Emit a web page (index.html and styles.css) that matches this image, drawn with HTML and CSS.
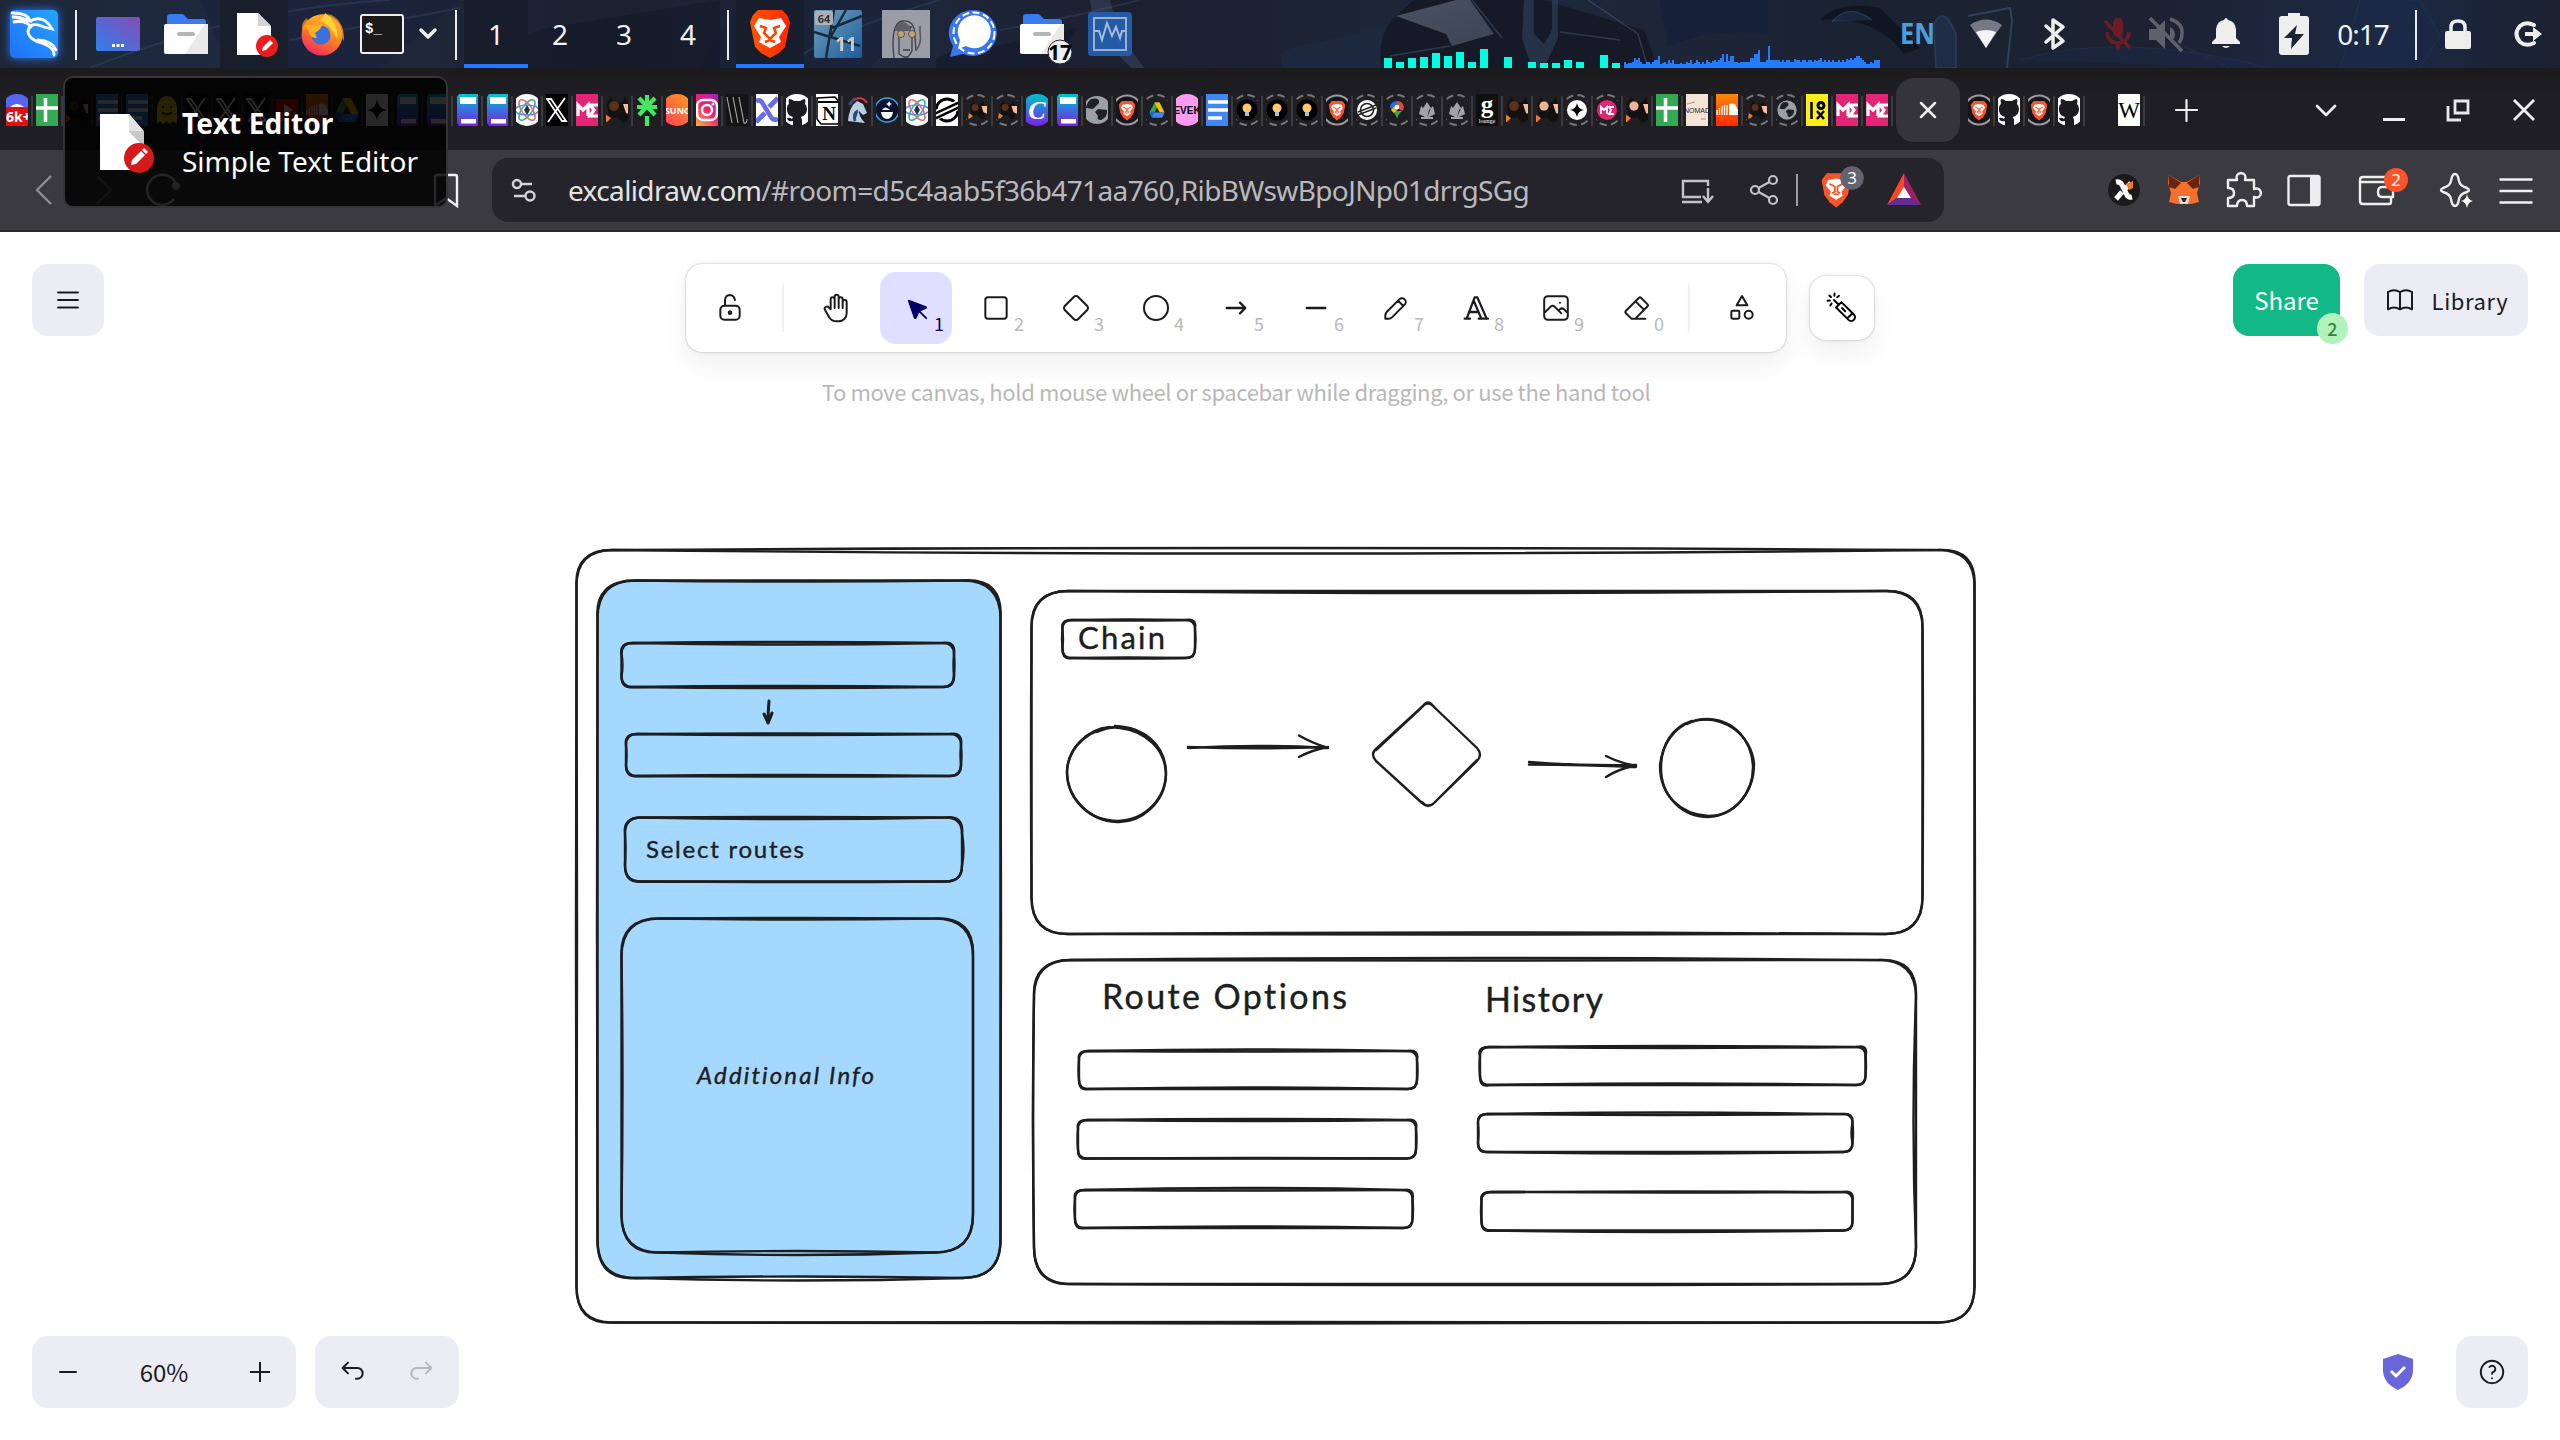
FILE: index.html
```html
<!DOCTYPE html>
<html lang="en">
<head>
<meta charset="utf-8">
<title>Excalidraw</title>
<link rel="stylesheet" href="styles.css">
</head>
<body>
<svg class="defs" width="0" height="0" aria-hidden="true">
<defs>
<linearGradient id="gNote" x1="0" y1="0" x2="0" y2="1"><stop offset="0" stop-color="#00c4cc"/><stop offset=".5" stop-color="#3b6fe0"/><stop offset="1" stop-color="#7d1fe8"/></linearGradient>
<linearGradient id="gInsta" x1="1" y1="0" x2="0" y2="1"><stop offset="0" stop-color="#8a1fe8"/><stop offset=".5" stop-color="#f5206c"/><stop offset="1" stop-color="#ffcf3f"/></linearGradient>
<linearGradient id="gSuno" x1="1" y1="0" x2="0" y2="1"><stop offset="0" stop-color="#ffa21a"/><stop offset="1" stop-color="#ff3a5c"/></linearGradient>
<linearGradient id="gCloud" x1="0" y1="0" x2="0" y2="1"><stop offset="0" stop-color="#ff8a00"/><stop offset="1" stop-color="#ff2a00"/></linearGradient>
<linearGradient id="gKali" x1="1" y1="0" x2="0" y2="1"><stop offset="0" stop-color="#25a4ff"/><stop offset="1" stop-color="#2070f8"/></linearGradient>
<linearGradient id="gDesk" x1="0" y1="1" x2="1" y2="0"><stop offset="0" stop-color="#3080ea"/><stop offset="1" stop-color="#854cb4"/></linearGradient>
<linearGradient id="gFox" x1=".8" y1="0" x2=".3" y2="1"><stop offset="0" stop-color="#ffe04a"/><stop offset=".45" stop-color="#ff8a1e"/><stop offset="1" stop-color="#f02860"/></linearGradient>
<linearGradient id="gBrave" x1="0" y1="0" x2="1" y2="0"><stop offset="0" stop-color="#ff5500"/><stop offset="1" stop-color="#ff2600"/></linearGradient>
<linearGradient id="gVm" x1="0" y1="0" x2="1" y2="1"><stop offset="0" stop-color="#7cb4cc"/><stop offset="1" stop-color="#1c64ac"/></linearGradient>
<linearGradient id="gMetal" x1="0" y1="0" x2="1" y2="1"><stop offset="0" stop-color="#4a5363"/><stop offset="1" stop-color="#3c4454"/></linearGradient>

<g id="cat"><path d="M6 10 10 3l5 6 6-1 4-5 2 7v16l-5 3-6-6-8 2z" fill="#111"/><circle cx="13" cy="12" r="5" fill="#5a3018"/><path d="M22 10h8v11l-5-2z" fill="#f7bd96"/><path d="M4 20l6 4-4 4H3z" fill="#f07a2c"/></g>
<g id="lion"><path d="M9 4h14l4 5-2 11-4 6-5 4-5-4-4-6L5 9z" fill="#fb542b"/><path d="M10 9l6-1 6 1 2 4-4 5 1 3-5 3-5-3 1-3-4-5z" fill="#fff"/><path d="M11 12l4 2v4l-2 1M21 12l-4 2v4l2 1M14 20h4" stroke="#fb542b" stroke-width="1.4" fill="none"/></g>
<g id="ring"><circle cx="16" cy="16" r="15" fill="none" stroke="#77777b" stroke-width="2" stroke-dasharray="7.5 4.28"/></g>
<g id="gem"><circle cx="16" cy="16" r="16" fill="#fff"/><g fill="none" stroke-width="1.6"><ellipse cx="16" cy="16" rx="5" ry="12" stroke="#3fb18a" transform="rotate(35 16 16)"/><ellipse cx="16" cy="16" rx="5" ry="12" stroke="#ec6a6a" transform="rotate(-35 16 16)"/><ellipse cx="16" cy="16" rx="5" ry="12" stroke="#5c8de8" transform="rotate(90 16 16)"/></g><path d="M16 11l3 5-3 5-3-5z" fill="#20304f"/></g>

<g id="t-discord"><circle cx="16" cy="16" r="16" fill="#5865f2"/><path d="M9 13q7-6 14 0v4H9z" fill="#fff"/><rect x="3" y="13" width="26" height="19" rx="4" fill="#e01010"/><text x="5" y="28" font-size="14" font-weight="700" fill="#fff" font-family="Noto Sans">6k+</text></g>
<g id="t-sheets"><rect width="32" height="32" fill="#34a853"/><path d="M5 14h22M14.500 4v24" stroke="#fff" stroke-width="3.500"/></g>
<g id="t-cat"><use href="#cat"/></g>
<g id="t-catl"><use href="#cat"/><circle cx="13" cy="12" r="4.500" fill="#e8b898"/></g>
<g id="t-catr"><use href="#ring"/><use href="#cat" transform="translate(5 5) scale(.7)"/></g>
<g id="t-docs"><rect width="32" height="32" fill="#4285f4"/><path d="M7 8h20M7 16h20M7 24h14" stroke="#fff" stroke-width="3.600"/></g>
<g id="t-hug"><path d="M6 30V14a10 12 0 0 1 20 0v16l-4-3-3 3-3-3-4 3-3-3z" fill="#ffd21e"/><path d="M12 12v2M20 12v2M11 18q5 5 10 0" stroke="#333" stroke-width="2" fill="none"/></g>
<g id="t-x"><rect width="32" height="32" fill="#000"/><path d="M6 5l15 22h4L10 5zM24 4 7 28" stroke="#fff" stroke-width="1.800" fill="none"/></g>
<g id="t-yt"><rect y="5" width="32" height="22" rx="4" fill="#f00"/><path d="M13 10l9 6-9 6z" fill="#fff"/></g>
<g id="t-sound"><rect width="32" height="32" fill="url(#gCloud)"/><path d="M6 16v5M8.500 14v7M11 12v9M13.500 11v10M16 11v10" stroke="#fff" stroke-width="1.300"/><path d="M18 10q7-2 8 5 6 0 5 6H18z" fill="#fff"/></g>
<g id="drive"><path d="M12 4h8l-4 8-8 15-4-7z" fill="#34a853"/><path d="M12 4h8l8 16h-8z" fill="#fbbc04"/><path d="M8 20h20l-4 8H8z" fill="#4285f4"/><path d="M8 28l-4-7 4-3 4 2z" fill="#1967d2"/></g>
<g id="t-drive"><use href="#drive"/></g>
<g id="t-driver"><use href="#ring"/><use href="#drive" transform="translate(6 6) scale(.63)"/></g>
<g id="t-star"><rect width="32" height="32" fill="#f4f4f4"/><path d="M16 5q1 10 10 11-9 1-10 11-1-10-10-11 9-1 10-11z"/></g>
<g id="t-starr"><use href="#ring"/><circle cx="16" cy="16" r="10" fill="#fff"/><path d="M16 9q1 6 7 7-6 1-7 7-1-6-7-7 6-1 7-7z"/></g>
<g id="t-note"><path d="M6 3l2-3h19v32H8l-2-3z" fill="url(#gNote)"/><rect x="9" y="3" width="16" height="7" fill="#fff"/><rect x="10" y="25" width="15" height="4.500" fill="#fff"/></g>
<g id="t-gem"><use href="#gem"/></g>
<g id="t-me"><rect width="32" height="32" fill="#e42575"/><path d="M7 22V11l5 5 5-5v11M27 11h-8l4 5-4 6h9" stroke="#fff" stroke-width="3.200" fill="none"/></g>
<g id="t-mer"><use href="#ring"/><circle cx="16" cy="16" r="10" fill="#e42575"/><path d="M10 20v-7l3 3 3-3v7M23 13h-5l2 3-2 4h5" stroke="#fff" stroke-width="1.800" fill="none"/></g>
<g id="t-link"><path d="M16 1v12M16 22v10M6 13h20M8 4l16 17M24 4 8 21" stroke="#43e660" stroke-width="4.200"/></g>
<g id="t-suno"><circle cx="16" cy="16" r="16" fill="url(#gSuno)"/><text x="17" y="19.500" text-anchor="middle" font-size="9" font-weight="700" fill="#fff" font-family="Noto Sans">SUNO</text></g>
<g id="t-insta"><rect width="32" height="32" fill="url(#gInsta)"/><rect x="6" y="6" width="20" height="20" rx="6" fill="none" stroke="#fff" stroke-width="2.400"/><circle cx="16" cy="16" r="5" fill="none" stroke="#fff" stroke-width="2.400"/><circle cx="22" cy="10" r="1.500" fill="#fff"/></g>
<g id="t-slash"><rect width="32" height="32" fill="#141414"/><path d="M6 3l5 26M12 3l5 26M18 3l5 26q3 1 3-4" stroke="#aaa" stroke-width="1.100" fill="none"/></g>
<g id="t-cross"><rect width="32" height="32" fill="#fff"/><path d="M5 7q5-2 7 3l8 13q2 4 7 2" stroke="#6b6be4" stroke-width="4.500" fill="none"/><path d="M27 4 18 13M14 19 5 28" stroke="#6b6be4" stroke-width="5"/></g>
<g id="t-git"><circle cx="16" cy="16" r="16" fill="#fff"/><path d="M12 32v-5q-5 1-6-3 3-1 5 1l1-2q-7-2-6-9 0-3 2-4-1-3 0-5 3 0 5 2h6q3-2 5-2 1 2 0 5 2 2 2 5 0 6-6 8l1 3v6z" fill="#1b1b20"/></g>
<g id="t-notion"><rect y="0" width="32" height="32" rx="2" fill="#fff"/><path d="M6 4l18-1 4 5v22H10l-4-5z" fill="none" stroke="#000" stroke-width="1.600"/><path d="M7 8h20" stroke="#000" stroke-width="2"/><text x="18" y="26" text-anchor="middle" font-size="19" font-weight="700" font-family="Liberation Serif">N</text></g>
<g id="t-horse"><path d="M7 27q1-14 9-20l6 3 4 9-4 2-4-4q0 6 6 12z" fill="#b9cfe4"/><path d="M8 11l6-7M14 27q-2-8 3-10" stroke="#2b4d83" stroke-width="3"/><path d="M13 6q8-5 13 3" stroke="#d82f3a" stroke-width="2" fill="none"/></g>
<g id="t-moon"><circle cx="16" cy="16" r="12" fill="#0a1230" stroke="#38a3dd" stroke-width="1.500"/><path d="M10 18h12q-1 7-6 7t-6-7z" fill="#fff"/><path d="M11 16q3-5 8 0z" fill="#fff"/><path d="M18 7l1 2 2 1-2 1-1 2-1-2-2-1 2-1z" fill="#fff"/></g>
<g id="t-stellar"><rect width="32" height="32" fill="#fff"/><circle cx="16" cy="16" r="11" fill="none" stroke="#000" stroke-width="2.800"/><path d="M2 20 30 7M2 25 30 12" stroke="#fff" stroke-width="5"/><path d="M3 20 29 8M3 25 29 13" stroke="#000" stroke-width="2.500"/></g>
<g id="t-stellarr"><use href="#ring"/><circle cx="16" cy="16" r="10" fill="#fff"/><circle cx="16" cy="16" r="6.500" fill="none" stroke="#222" stroke-width="1.500"/><path d="M7 18l18-7M7 21l18-7" stroke="#222" stroke-width="1.500"/></g>
<g id="t-canva"><circle cx="16" cy="16" r="16" fill="url(#gNote)"/><text x="16" y="25" text-anchor="middle" font-size="26" font-weight="700" font-style="italic" fill="#fff" font-family="Liberation Serif">C</text></g>
<g id="globe"><circle cx="16" cy="16" r="14" fill="#9aa0a6"/><path d="M10 5q9-2 8 4l-6 6-7-1q1-6 5-9zM17 15l9 1q1 7-6 10-5 0-3-4l-3-4z" fill="#202124"/></g>
<g id="t-globe"><use href="#globe"/></g>
<g id="t-glober"><use href="#ring"/><use href="#globe" transform="translate(5 5) scale(.69)"/></g>
<g id="t-lion"><circle cx="16" cy="16" r="14.500" fill="#15151a" stroke="#9a9aa0" stroke-width="2.200"/><use href="#lion" transform="translate(4 4) scale(.75)"/></g>
<g id="t-evek"><circle cx="16" cy="16" r="16" fill="#ff9cf2"/><text x="16" y="20" text-anchor="middle" font-size="10" font-weight="700" font-family="Liberation Sans">EVEK</text></g>
<g id="t-bulb"><use href="#ring"/><circle cx="16" cy="16" r="10.500"/><circle cx="16" cy="14" r="4.500" fill="#ffc868"/><rect x="14" y="18" width="4" height="4" fill="#b9b9b9"/></g>
<g id="t-map"><use href="#ring"/><path d="M16 26q0-5-5-9h10q-5 4-5 9z" fill="#34a853"/><path d="M9 13a7 6 0 0 1 7-6l2 6-6 5z" fill="#1a73e8"/><path d="M16 7a7 6 0 0 1 5 10l-5-3z" fill="#ea4335"/><path d="M10 16l5-5 3 3-5 5z" fill="#fbbc04"/><circle cx="16" cy="13" r="2.300" fill="#fff"/></g>
<g id="t-lotus"><use href="#ring"/><path d="M16 8l4 6-4 10-4-10zM10 12l4 4 2 8-8-4zM22 12l-4 4-2 8 8-4z" fill="#a3a3a5"/><path d="M10 24h12" stroke="#a3a3a5" stroke-width="2"/></g>
<g id="t-g"><rect width="32" height="32" fill="#101010"/><text x="16" y="19" text-anchor="middle" font-size="25" font-weight="700" fill="#fff" font-family="Liberation Serif">g</text><text x="16" y="29" text-anchor="middle" font-size="6" fill="#fff" font-family="Liberation Serif">lounge</text></g>
<g id="t-nomad"><rect width="32" height="32" fill="#f3e4d6"/><text x="16" y="19" text-anchor="middle" font-size="7" fill="#222" font-family="Liberation Sans">NOMAD</text><path d="M6 10l8-2M20 25h5" stroke="#999"/></g>
<g id="t-lox"><rect width="32" height="32" fill="#fcee1e"/><path d="M10.500 8v17" stroke="#000" stroke-width="2.500"/><circle cx="20" cy="11.500" r="3" fill="none" stroke="#000" stroke-width="3"/><path d="M16 17l7 8M23 17l-7 8" stroke="#000" stroke-width="2.500"/></g>
<g id="t-wiki"><rect width="32" height="32" fill="#fff"/><text x="16" y="24" text-anchor="middle" font-size="23" font-family="Liberation Serif">W</text></g>
</defs>
</svg>

<header class="panel">
<svg class="wallpaper" viewBox="0 0 2560 68" aria-hidden="true">
<path d="M200 0h260l-80 68H230zM740 0h190l-60 68H700z" fill="#18203a" opacity=".5"/>
<path d="M90 68q150-60 300-68M290 40l170-32M780 68q60-40 160-68M1000 30q60-10 140-30" stroke="#46618c" stroke-width="2" fill="none" opacity=".25"/>
<path d="M936 60q20-16 60-14l80-18-20 40h-120zM520 50q0-20 40-24l160-26v68H520z" fill="#0e1524" opacity=".4"/>
<path d="M1090 0h20q6 30 34 68h-12q-40-34-42-68z" fill="#6d87ac" opacity=".2"/>
<path d="M1280 56q6-10 40-14l70-18-8 44h-100z" fill="#1d2940" opacity=".8"/>
<path d="M1382 68q-6-30 12-50l20-18h130l100 30 14 38z" fill="#151a26"/>
<path d="M1396 16 1456 0h14l24 34-42 12-6-12z" fill="url(#gMetal)"/>
<path d="M1524 0h10v34l10 10 8-14V0h6v38l-14 30h-12l-10-30z" fill="#31435f" opacity=".6"/>
<path d="M1472 0l30 38M1560 32l60 8M1588 0l50 34 10 34M1390 56l60-10" stroke="#61769c" stroke-width="1.500" fill="none" opacity=".35"/>
<path d="M1660 0h108v35q-50-10-100 12z" fill="#14203a" opacity=".7"/>
<path d="M1820 20q20-20 60-12l40 40-16 6q-30-40-84-34z" fill="#0f1622"/>
<path d="M1832 22q16-20 40-2M1936 68l-2-44q10-20 22 10v34z" stroke="#3f5c88" stroke-width="1.500" fill="#263a5c" opacity=".45"/>
<path d="M1968 16l42-8 2 12-5 48" stroke="#5579a8" stroke-width="2" fill="none" opacity=".35"/>
<path d="M2020 60q100-30 250 8M2170 40l60 28M2360 0h60l20 36-20 32h-80z" stroke="#233d6b" fill="#1a2b4c" opacity=".4"/>
</svg>
<div class="slot"><svg viewBox="-34 0 68 68"><rect x="-24" y="10" width="48" height="48" rx="5" class="glow" fill="url(#gKali)"/><path d="M-22 13q16 0 18 8-12-5-18-4 10 0 15 6-8-3-14-1 14-2 18 5M-4 21q14-7 22 8l-8-2q-12-5-15 1-4 8 9 14 16 4 16 13M4 40q14 1 18 10" fill="none" stroke="#fff" stroke-width="2.800" stroke-linecap="round"/></svg></div>
<div class="slot sep"><i></i></div>
<div class="slot"><svg viewBox="-34 0 68 68"><rect x="-22" y="17" width="44" height="34" rx="2" fill="url(#gDesk)"/><path d="M-6 45.500h3M-1.500 45.500h3M3 45.500h3" stroke="#fff" stroke-width="3"/></svg></div>
<div class="slot"><svg viewBox="-34 0 68 68"><path d="M-19 26v-9q0-3 3-3h13l5 5h15q3 0 3 3v6z" fill="#367bf0"/><rect x="-22" y="24" width="44" height="30" rx="2" fill="#fff"/><path d="M22 24v30H-1l20-30z" fill="#e9e9ea"/><path d="M-7 34h14" stroke="#b5b5b5" stroke-width="4" stroke-linecap="round"/></svg></div>
<div class="slot hover"><svg viewBox="-34 0 68 68"><path d="M-17 13h21l13 13v29h-34z" fill="#fff"/><path d="M4 13l13 13H4z" fill="#d3d3d3"/><circle cx="13" cy="46" r="11" fill="#ed1c1c"/><path d="M8 51l1-4 7-7 3 3-7 7z" fill="#fff"/></svg></div>
<div class="slot"><svg viewBox="-34 0 68 68"><circle cy="35" r="20.500" fill="url(#gFox)"/><path d="M-20 30q-1-8 5-12l2 5q6-2 8-8 8-2 14 0l-4-2q18 6 17 28l-8-12z" fill="#ff9a1f" opacity=".7"/><circle cx="-1" cy="35" r="9.500" fill="#3a6fe0"/><path d="M-16 25q8-1 11 1l5-2q0 5-7 9l2 5q-7 0-8-6z" fill="#ffb01f"/><path d="M-2 20Q2 18 3 13q14 10 12 26-6-14-17-19z" fill="#ffd13a"/></svg></div>
<div class="slot w52"><svg viewBox="-26 0 52 68"><rect x="-21" y="15" width="42" height="38" rx="2" fill="#1a1a1a" stroke="#eee" stroke-width="2"/><text x="-17" y="33" class="mono" font-size="14">$_</text></svg></div>
<div class="slot w40"><svg viewBox="-20 0 40 68"><path d="M-7 30l7 7 7-7" class="ln w3"/></svg></div>
<div class="slot sep"><i></i></div>
<div class="slot ws on">1</div><div class="slot ws">2</div><div class="slot ws">3</div><div class="slot ws">4</div>
<div class="slot sep"><i></i></div>
<div class="slot on"><svg viewBox="-34 0 68 68"><path d="M-12 10h24l5 5 3 7-5 25-6 6-9 5-9-5-6-6-5-25 3-7z" fill="url(#gBrave)"/><path d="M-11 18l11 2 11-2 5 8-7 11 2 5-11 6-11-6 2-5-7-11z" fill="#fff"/><path d="M-10 26l6 2-2 5 6 6 6-6-2-5 6-2M-5 42l5-2 5 2" fill="none" stroke="#ff4200" stroke-width="2.500"/></svg></div>
<div class="slot"><svg class="dim" viewBox="-34 0 68 68"><rect x="-24" y="10" width="48" height="48" rx="2" fill="url(#gVm)"/><path d="M-24 32 22 46M-4 10-12 58M8 10l-16 28M-6 28l30-12" stroke="#1b2a3d" stroke-width="2.500"/><rect x="-23" y="11" width="18" height="14" rx="2" fill="#c3c3c3"/><text x="-14" y="22.500" text-anchor="middle" class="lbl" font-size="11" fill="#333">64</text><text x="8" y="51" text-anchor="middle" class="lbl" font-size="19" fill="#e4e4e4">11</text></svg></div>
<div class="slot"><svg viewBox="-34 0 68 68"><rect x="-24" y="10" width="48" height="48" fill="#9a9da6"/><path d="M-12 58q-4-34 8-37 13-2 13 16l1 14M-7 32v22l5 3h4l4-6V30M-6 27h12M-3 50h7" fill="none" stroke="#3b3e48" stroke-width="1.300"/><path d="M-11 28q8-12 16 0v3h-16z" fill="#5c5f68"/><circle cx="-5" cy="34" r="3.500" fill="#c8a46a" stroke="#555"/><circle cx="6" cy="34" r="3.500" fill="#c8a46a" stroke="#555"/><path d="M10 50q6-6 4-18v-6" stroke="#55575f" fill="none" stroke-width="1.600"/></svg></div>
<div class="slot"><svg viewBox="-34 0 68 68"><path d="M-24 57l3-11a24 23 0 1 1 10 8z" fill="#3a76f0"/><circle cy="33" r="20.500" fill="none" stroke="#fff" stroke-width="2" stroke-dasharray="7 3.500"/><path d="M-16 49l2-9a16.500 16.500 0 1 1 6 6z" fill="#fff"/></svg></div>
<div class="slot"><svg viewBox="-34 0 68 68"><path d="M-19 26v-9q0-3 3-3h13l5 5h15q3 0 3 3v6z" fill="#367bf0"/><rect x="-22" y="24" width="44" height="30" rx="2" fill="#fff"/><path d="M22 24v30H-1l20-30z" fill="#e9e9ea"/><path d="M-7 34h14" stroke="#b5b5b5" stroke-width="4" stroke-linecap="round"/><circle cx="18" cy="52" r="12" fill="#eee" stroke="#222"/><text x="18" y="60" text-anchor="middle" class="lbl" font-size="21" fill="#000">17</text></svg></div>
<div class="slot"><svg viewBox="-34 0 68 68"><rect x="-22" y="12" width="44" height="44" rx="4" fill="#235ba9"/><rect x="-16" y="18" width="32" height="32" fill="none" stroke="#9cafca" stroke-width="2"/><path d="M-16 31h5l3 9 5-17 5 13 4-9 4 11 2-7h4" fill="none" stroke="#a9bbd4" stroke-width="2"/></svg></div>
<svg class="graphs" viewBox="0 0 496 68"><path id="cpu" fill="#00ffe1"/><path id="net" fill="#237bff"/></svg>
<div class="slot"><svg viewBox="-34 0 68 68"><text x="-18" y="43.500" class="lbl" font-size="28.500" fill="#4c9fdc" textLength="35" lengthAdjust="spacingAndGlyphs">EN</text></svg></div>
<div class="slot"><svg viewBox="-34 0 68 68"><path d="M-16 25q16-11 32 0l-16 23z" fill="#8b9098" opacity=".8"/><path d="M-10 32q10-4 20 0L0 48z" fill="#f4f4f4"/></svg></div>
<div class="slot"><svg viewBox="-34 0 68 68"><path d="M-8 26 9 41-1 48V20l10 7L-8 42" class="ln" stroke-width="3.500"/></svg></div>
<div class="slot w56"><svg viewBox="-28 0 56 68"><rect x="-3" y="18" width="10" height="19" rx="5" fill="#6a1d24"/><path d="M-9 32q1 11 11 11t11-11M2 43v7M-11 21l25 27" fill="none" stroke="#6a1d24" stroke-width="3.500"/></svg></div>
<div class="slot w46"><svg viewBox="-23 0 46 68"><path d="M-18 29h7l9-9v29l-9-9h-7zM3 27q5 2 5 8 0 4-5 6z" fill="#5c616b"/><path d="M3 19q13 4 12 15 0 5-3 9M-17 18l32 33" fill="none" stroke="#5c616b" stroke-width="3.500"/></svg></div>
<div class="slot w72"><svg viewBox="-36 0 72 68"><path d="M-14 44v-2l4-4v-9q1-8 8-9 2-4 4 0 7 1 8 9v9l4 4v2zM-4 46h8q-4 4-8 0z" fill="#eeeeec"/></svg></div>
<div class="slot w64"><svg viewBox="-32 0 64 68"><path d="M-6 13H6v3h6q3 0 3 3v33q0 3-3 3h-24q-3 0-3-3V19q0-3 3-3h6z" fill="#eeeeec"/><path d="M3 25-10 38h8l-1 11L10 34H1z" fill="#1d2433"/></svg></div>
<div class="slot w74 clock">0:17</div>
<div class="slot w32 sep"><i></i></div>
<div class="slot w52"><svg viewBox="-26 0 52 68"><rect x="-13" y="31" width="26" height="18" rx="2" fill="#eeeeec"/><path d="M-7 32v-5q0-6 7-6t7 6v5" fill="none" stroke="#eeeeec" stroke-width="3.500"/></svg></div>
<div class="slot w76"><svg viewBox="-44 0 76 68"><path d="M6 25q-8-4-14 1-7 8 0 16 6 5 14 1" class="ln" stroke-width="4"/><path d="M-3 32H5v-5l9 7-9 7v-5h-8z" fill="#eeeeec"/></svg></div>
</header>

<div class="tabstrip">
<div class="tabs" id="tabs"></div>
<div class="active-tab"><svg viewBox="0 0 64 64"><path d="M25 25l14 14M39 25 25 39" class="ln" stroke-width="2.500"/></svg></div>
<div class="tabs rest" id="tabs-rest"></div>
<div class="winctl">
<svg viewBox="-40 68 80 82"><path d="M-10 110H11M.500 100v21" class="ln" stroke-width="2.200"/></svg>
<svg class="push" viewBox="-40 68 68 82"><path d="M-9 106l9 9 9-9" class="ln" stroke-width="2.800"/></svg>
<svg viewBox="-40 68 68 82"><path d="M-11 119.500h22" stroke="#eee" stroke-width="3"/></svg>
<svg viewBox="-36 68 68 82"><path d="M-3 101h13v12h-13zM-10 106v14H3" fill="none" stroke="#e8e8ea" stroke-width="2.800"/></svg>
<svg viewBox="-34 68 68 82"><path d="M-10 100 10 120M10 100-10 120" stroke="#eee" stroke-width="2.800"/></svg>
</div>
</div>

<div class="toolbar">
<nav class="nav">
<svg viewBox="-30 150 60 80"><path d="M7 176-7 190 7 204" fill="none" stroke="#8f8f93" stroke-width="2.400"/></svg>
<svg viewBox="-30 150 60 80"><path d="M-7 176 7 190-7 204" fill="none" stroke="#77777b" stroke-width="2.400"/></svg>
<svg viewBox="-30 150 60 80"><path d="M10 199a15 15 0 1 1 2-15" fill="none" stroke="#e6e6ea" stroke-width="2.400"/><circle cx="12" cy="186" r="4" fill="#e6e6ea"/></svg>
<svg class="push" viewBox="-30 150 60 80"><path d="M-11 206v-29q0-2 2-2H9q2 0 2 2v29l-11-8z" fill="none" stroke="#f2f2f4" stroke-width="2.400"/></svg>
</nav>
<div class="address">
<svg class="w76" viewBox="-32 150 76 80"><path d="M-4 184H8M-10 196H1" stroke="#d5d5d8" stroke-width="2.400"/><circle cx="-7" cy="184" r="4" fill="none" stroke="#d5d5d8" stroke-width="2.400"/><circle cx="6" cy="196" r="4.500" fill="none" stroke="#d5d5d8" stroke-width="2.400"/></svg>
<span class="url"><b>excalidraw.com</b>/#room=d5c4aab5f36b471aa760,RibBWswBpoJNp01drrgSGg</span>
<svg class="w68 push" viewBox="-34 150 68 80"><path d="M11 186v-5H-14v16H4M-15 202H5M11 188v12M6 196l5 6 5-6" fill="none" stroke="#c3c3c7" stroke-width="2.400"/></svg>
<svg class="w62" viewBox="-33 150 62 80"><path d="M-9 190 9 180M-9 190 9 200" stroke="#c3c3c7" stroke-width="2.200"/><g fill="#25242a" stroke="#c3c3c7" stroke-width="2.200"><circle cx="-9" cy="190" r="4"/><circle cx="9" cy="180" r="4"/><circle cx="9" cy="200" r="4"/></g></svg>
<i class="bar"></i>
<svg class="w68" viewBox="-34 150 68 80"><use href="#lion" transform="translate(-20 168) scale(1.32)"/><circle cx="17" cy="178" r="11.800" fill="#63636f"/><text x="17" y="184" text-anchor="middle" font-size="17" fill="#fff" class="noto">3</text></svg>
<svg class="w68" viewBox="-35 150 68 80"><path d="M0 173-17 205 0 194z" fill="#ff4724"/><path d="M0 173 17 205 0 194z" fill="#9e1f63"/><path d="M-17 205H17L0 192z" fill="#662d91"/><path d="M0 187-7 198H7z" fill="#fff"/></svg>
</div>
<div class="ext">
<svg viewBox="-30 150 60 80"><circle cy="190" r="16" fill="#1a1a1a"/><path d="M-8 182q5-1 7 5l3 6q2 5 6 4M7 183l-6 6M-2 192l-6 7" fill="none" stroke="#fff" stroke-width="5"/><path d="M2 184l7-3v7l-4 2z" fill="#f07a2c"/></svg>
<svg viewBox="-30 150 60 80"><path d="M-15 175-3 182H3L15 175l1 8-3 10 2 9-8 2H-7l-8-2 2-9-3-10z" fill="#f6702c"/><path d="M-15 175-3 183l-6 6-6-2zM15 175 3 183l6 6 6-2z" fill="#6b2412"/><path d="M-6 196H6L4 204H-4z" fill="#e6d8d0"/><path d="M-3 198H3L1 202H-1z" fill="#222"/></svg>
<svg viewBox="-28 150 60 80"><path d="M-14 180h9q-2-6 4-7 6 1 4 7h9v9q6-2 7 4-1 6-7 4v9H5q0-6-5-6t-5 6h-9v-8q6 0 6-5t-6-5z" class="ln" stroke-width="2.400"/></svg>
<svg viewBox="-30 150 60 80"><rect x="-15.500" y="176" width="31" height="29" rx="2" fill="none" stroke="#ededf0" stroke-width="2.400"/><path d="M6 176h10v29H6z" fill="#ededf0"/></svg>
<svg class="w84" viewBox="-42 150 84 80"><path d="M15 187v-8q0-2-2-2h-26q-3 0-3 3v21q0 3 3 3h26q2 0 2-2v-5M-15 182H14M17 187H6q-4 0-4 5t4 5h11z" class="ln" stroke-width="2.400"/><circle cx="20" cy="180" r="12" fill="#fb542b"/><text x="20" y="186" text-anchor="middle" font-size="17" fill="#fff" class="noto">2</text></svg>
<svg class="w76" viewBox="-38 150 76 80"><path d="M-1 174q3 0 4 7 1 5 8 7 4 2 0 4-7 2-8 7-1 7-4 7t-4-7q-1-5-8-7-4-2 0-4 7-2 8-7 1-7 4-7z" class="ln" stroke-width="2.400"/><path d="M11 194q1 6 6 7-5 1-6 7-1-6-6-7 5-1 6-7z" fill="#fff"/></svg>
<svg class="w44" viewBox="-22 150 44 80"><path d="M-16.500 179.500h33M-16.500 191h33M-16.500 202.500h33" stroke="#f0f0f2" stroke-width="2.400"/></svg>
</div>
</div>

<main class="app">
<svg class="scene" id="scene" viewBox="0 232 2560 1208">
<g id="strokes"></g>
<g class="hand">
<text x="646" y="858" font-size="24" textLength="158">Select routes</text>
<text x="697" y="1084" font-size="24" textLength="177" class="slant">Additional Info</text>
<text x="1078" y="649" font-size="31" textLength="87">Chain</text>
<text x="1102" y="1009" font-size="34" textLength="245">Route Options</text>
<text x="1485" y="1012" font-size="34" textLength="118">History</text>
</g>
</svg>
<div class="ui">
<div class="top">
<button class="btn sq"><svg class="i" viewBox="0 0 24 24"><path d="M4 6h16M4 12h16M4 18h16"/></svg></button>
<div class="center">
<div class="tools">
<div class="island">
<button class="tool"><svg class="i" viewBox="0 0 20 20"><path d="M13.542 8.542H6.458a2.500 2.500 0 0 0-2.500 2.500v3.750a2.500 2.500 0 0 0 2.500 2.500h7.084a2.500 2.500 0 0 0 2.500-2.500v-3.750a2.500 2.500 0 0 0-2.500-2.500ZM10 13.700a.8.8 0 1 0 0-1.600.8.8 0 0 0 0 1.600ZM6.900 8.500V5q.3-3 3-3.100 2.500.1 3.200 3.100"/></svg></button>
<i class="div"></i>
<button class="tool"><svg class="i" viewBox="0 0 24 24"><path d="M8 13v-7.500a1.500 1.500 0 0 1 3 0v6.500M11 5.500v-2a1.500 1.500 0 1 1 3 0v8.500M14 5.500a1.500 1.500 0 0 1 3 0v6.500M17 7.500a1.500 1.500 0 0 1 3 0v8.500a6 6 0 0 1-6 6h-2h.208a6 6 0 0 1-5.012-2.700l-.196-.3c-.312-.479-1.407-2.388-3.286-5.728a1.500 1.500 0 0 1 .536-2.022a1.867 1.867 0 0 1 2.280.280l1.470 1.470"/></svg></button>
<button class="tool sel"><svg class="i f" viewBox="0 0 22 22"><path d="M6 6l4.153 11.793a.365.365 0 0 0 .331.207a.366.366 0 0 0 .332-.207l2.184-4.793l4.787-1.994a.355.355 0 0 0 .213-.323a.355.355 0 0 0-.213-.323l-11.787-4.360zM13.500 13.500l4.500 4.500"/></svg><kbd>1</kbd></button>
<button class="tool"><svg class="i" viewBox="0 0 24 24"><rect x="4" y="4" width="16" height="16" rx="2"/></svg><kbd>2</kbd></button>
<button class="tool"><svg class="i" viewBox="0 0 24 24"><path d="M10.500 20.400l-6.900-6.900c-.781-.781-.781-2.219 0-3l6.900-6.900c.781-.781 2.219-.781 3 0l6.900 6.900c.781.781.781 2.219 0 3l-6.900 6.900c-.781.781-2.219.781-3 0z"/></svg><kbd>3</kbd></button>
<button class="tool"><svg class="i" viewBox="0 0 24 24"><circle cx="12" cy="12" r="9"/></svg><kbd>4</kbd></button>
<button class="tool"><svg class="i b" viewBox="0 0 24 24"><path d="M5 12h14M15 16l4-4M15 8l4 4"/></svg><kbd>5</kbd></button>
<button class="tool"><svg class="i b" viewBox="0 0 24 24"><path d="M5 12h14"/></svg><kbd>6</kbd></button>
<button class="tool"><svg class="i" viewBox="0 0 20 20"><path d="m7.643 15.690 7.774-7.773a2.357 2.357 0 1 0-3.334-3.334L4.310 12.357a3.333 3.333 0 0 0-.977 2.357v1.953h1.953c.884 0 1.732-.352 2.357-.977ZM11.250 5.417l3.333 3.333"/></svg><kbd>7</kbd></button>
<button class="tool"><svg class="i b" viewBox="0 0 24 24"><path d="M3.500 20h4M14 20h7M6.900 15h6.900M10.200 6.300 16 20M5 20l6-16h2l7 16"/></svg><kbd>8</kbd></button>
<button class="tool"><svg class="i" viewBox="0 0 20 20"><path d="M12.500 6.667h.010M4.910 2.625h10.180a2.284 2.284 0 0 1 2.285 2.284v10.182a2.284 2.284 0 0 1-2.284 2.284H4.909a2.284 2.284 0 0 1-2.284-2.284V4.909a2.284 2.284 0 0 1 2.284-2.284ZM3.333 12.500l3.334-3.333c.773-.745 1.726-.745 2.500 0l4.166 4.166M11.667 11.667l.833-.834c.774-.744 1.726-.744 2.500 0l1.667 1.667"/></svg><kbd>9</kbd></button>
<button class="tool"><svg class="i" viewBox="0 0 24 24"><path d="M19 20h-10.500l-4.210-4.300a1 1 0 0 1 0-1.410l10-10a1 1 0 0 1 1.410 0l5 5a1 1 0 0 1 0 1.410l-9.200 9.300M18 13.300l-6.300-6.300"/></svg><kbd>0</kbd></button>
<i class="div"></i>
<button class="tool"><svg class="i" viewBox="0 0 24 24"><path d="M12 3l-4 7h8zM5 14h4a1 1 0 0 1 1 1v4a1 1 0 0 1-1 1H5a1 1 0 0 1-1-1v-4a1 1 0 0 1 1-1z"/><circle cx="17" cy="17" r="3"/></svg></button>
</div>
<button class="laser"><svg class="i" viewBox="0 0 20 20"><path transform="rotate(90 10 10)" d="m9.644 13.690 7.774-7.773a2.357 2.357 0 0 0-3.334-3.334l-7.773 7.774L8 12l1.643 1.690ZM13.250 3.417l3.333 3.333M10 10l2-2M5 15l3-3M2.156 17.894l1-1M5.453 19.029l-.144-1.407M2.377 11.887l.866 1.118M8.354 17.273l-1.194-.758M.953 14.652l1.408.130"/></svg></button>
</div>
<p class="hint">To move canvas, hold mouse wheel or spacebar while dragging, or use the hand tool</p>
</div>
<div class="right">
<button class="btn share">Share<span class="count">2</span></button>
<button class="btn lib"><svg class="i" viewBox="0 0 20 20"><path d="M2.500 15.833a7.500 7.500 0 0 1 7.500 0 7.500 7.500 0 0 1 7.500 0M2.500 5a7.500 7.500 0 0 1 7.500 0 7.500 7.500 0 0 1 7.500 0M2.500 5v10.833M10 5v10.833M17.500 5v10.833"/></svg><span>Library</span></button>
</div>
</div>
<div class="bottom">
<div class="btn zoom"><svg class="i" viewBox="0 0 20 20"><path d="M5 10h10"/></svg><span>60%</span><svg class="i" viewBox="0 0 20 20"><path d="M10 4.200v11.600M4.200 10h11.600"/></svg></div>
<div class="btn hist"><svg class="i" viewBox="0 0 20 20"><path d="M7.500 10.833 4.167 7.500 7.500 4.167M4.167 7.500h9.166a3.333 3.333 0 0 1 0 6.667H12.500"/></svg><svg class="i off" viewBox="0 0 20 20"><path d="M12.500 10.833 15.833 7.500 12.500 4.167M15.833 7.500H6.667a3.333 3.333 0 1 0 0 6.667H7.500"/></svg></div>
<svg class="shield" viewBox="0 0 32 36"><path d="M16 0l15 5v11q0 13-15 20Q1 29 1 16V5z" fill="#6965db"/><path d="M9 17l5 5 9-9" fill="none" stroke="#fff" stroke-width="3"/></svg>
<button class="btn sq"><svg class="i" viewBox="0 0 24 24"><circle cx="12" cy="12" r="9"/><path d="M12 17v.010M12 13.500a1.500 1.500 0 0 1 1-1.500a2.600 2.600 0 1 0-3-4"/></svg></button>
</div>
</div>
</main>

<aside class="tip">
<svg viewBox="0 0 58 60"><path d="M0 0h29l15 18v38H0z" fill="#fff"/><path d="M29 0v18h0l15 15V18z" fill="#c9c9c9"/><path d="M29 0l15 17H29z" fill="#e3e3e3"/><circle cx="39" cy="44" r="15" fill="#d41a1a"/><path d="M31 51l1-5 9-9 4 4-9 9zM42 36l2-2 4 4-2 2z" fill="#fff"/></svg>
<div><strong>Text Editor</strong><span>Simple Text Editor</span></div>
</aside>
<script src="scene.js"></script>
</body>
</html>
```
FILE: styles.css
```css
* { box-sizing: border-box; }
body { margin: 0; width: 2560px; height: 1440px; overflow: hidden; background: #fff; font-family: "Noto Sans", sans-serif; display: flex; flex-direction: column; position: relative; }
button { border: 0; padding: 0; font: inherit; background: none; }
svg { display: block; flex: none; }
.defs { position: absolute; }
.ln { fill: none; stroke: #eeeeec; stroke-linecap: round; stroke-linejoin: round; }
.w3 { stroke-width: 3.5; }
.push { margin-left: auto; }
.mono { font-family: "Liberation Mono", monospace; font-weight: 700; fill: #fff; }
.lbl { font-family: "Noto Sans", sans-serif; font-weight: 700; }
.noto { font-family: "Noto Sans", sans-serif; }

/* desktop panel */
.panel { height: 68px; flex: none; display: flex; position: relative; color: #f2f2f2; font-size: 28px;
  background: linear-gradient(90deg, #1e2738 0, #1f2a40 10%, #1c2130 24%, #1f283c 34%, #1b2030 44%, #1e283c 60%, #1b2232 72%, #1c2232 84%, #1c2945 93%, #1b2130 100%); }
.wallpaper { position: absolute; left: 0; top: 0; width: 2560px; height: 68px; }
.slot { width: 68px; height: 68px; flex: none; position: relative; display: flex; align-items: center; justify-content: center; }
.slot svg { width: 100%; height: 68px; }
.slot.sep { width: 16px; }
.sep i { width: 2px; height: 50px; background: #ececec; margin-top: 2px; }
.slot.hover { height: 70px; align-items: flex-start; background: #191e2b; }
.slot.on { background: #181d2b; box-shadow: inset 0 -4px #2577ff; }
.slot.ws { width: 64px; }
.slot .dim { opacity: .88; }
.glow { filter: drop-shadow(0 0 4px #2a7bff); }
.w32.w32 { width: 32px; } .w40 { width: 40px; } .w44.w44 { width: 44px; } .w46 { width: 46px; } .w52 { width: 52px; }
.w56 { width: 56px; } .w62 { width: 62px; } .w64 { width: 64px; } .w68 { width: 68px; } .w72 { width: 72px; }
.w74 { width: 74px; } .w76.w76 { width: 76px; } .w84.w84 { width: 84px; }
.clock { letter-spacing: -1px; }
.graphs { width: 496px; height: 68px; margin-left: auto; margin-right: 4px; position: relative; }

/* browser tab strip */
.tabstrip { height: 82px; flex: none; display: flex; background: linear-gradient(#1b1b1d, #1f1e23 30px); padding-left: 6px; }
.tabs { display: flex; align-items: center; gap: 8px; height: 84px; width: 1890px; }
.tabs svg { width: 22px; height: 32px; }
.tabs .tab { position: relative; }
.tabs .tab::after { content: ""; position: absolute; left: 25px; top: 2px; width: 2px; height: 30px; background: #3a3a3f; }
.active-tab { width: 64px; height: 64px; margin-top: 10px; background: #34343a; border-radius: 18px; }
.tabs.rest { width: 186px; padding-left: 8px; }
.rest .tab:last-child { margin-left: 30px; }
.winctl { display: flex; flex: 1; padding-right: 2px; }
.winctl svg { width: 68px; height: 82px; }
.winctl svg:first-child { width: 80px; }
.winctl .push { margin-left: auto; }

/* browser toolbar */
.toolbar { height: 82px; flex: none; display: flex; background: #3b3a40; border-bottom: 2px solid #2a292e; }
.toolbar svg { height: 80px; }
.nav { width: 492px; display: flex; padding: 0 16px 0 14px; }
.nav svg, .ext svg { width: 60px; }
.address { width: 1452px; height: 64px; margin-top: 8px; display: flex; align-items: center; background: #25242a; border-radius: 16px; padding-right: 7px; }
.url { font-size: 28px; color: #b9b9bd; letter-spacing: -.62px; white-space: nowrap; }
.url b { font-weight: 400; color: #e3e3e6; }
.bar { width: 2px; height: 32px; background: #9c9ca1; margin: 0 3px; }
.ext { display: flex; margin-left: auto; padding-right: 22px; }

/* drawing app */
.app { flex: 1; display: grid; font-family: "Noto Sans CJK SC", sans-serif; color: #1b1b1f; }
.scene, .ui { grid-area: 1 / 1; }
.scene { width: 2560px; height: 1208px; }
.ui { position: relative; display: flex; flex-direction: column; justify-content: space-between; padding: 32px; }
.hand { font-family: "Lato", sans-serif; fill: #1e1e1e; stroke: #1e1e1e; stroke-width: .4; font-variant-ligatures: none; }
.slant { font-style: italic; }
.i { width: 32px; height: 32px; fill: none; stroke: currentColor; stroke-width: 1.25; stroke-linecap: round; stroke-linejoin: round; }
.i[viewBox="0 0 24 24"] { stroke-width: 1.5; }
.i.b { stroke-width: 1.7; }
.i.f { fill: currentColor; }
.top { display: flex; justify-content: space-between; align-items: flex-start; }
.btn { height: 72px; border-radius: 16px; background: #ececf4; color: #1b1b1f; display: flex; align-items: center; justify-content: center; font-size: 24px; }
.sq { width: 72px; }
.sq .i { width: 30px; height: 30px; }
.center { width: 1188px; margin-left: 391px; margin-right: auto; }
.tools { display: flex; align-items: center; justify-content: space-between; }
.center .tools { width: 1188px; margin-left: 191px; }
.island { width: 1100px; height: 88px; padding: 8px; display: flex; gap: 8px; align-items: center; border-radius: 16px; background: #fff; }
.island, .laser { box-shadow: 0 0 2px rgba(0,0,0,.3), 0 0 6px rgba(0,0,0,.06), 0 14px 28px rgba(0,0,0,.06); }
.tool { width: 72px; height: 72px; border-radius: 16px; position: relative; display: flex; align-items: center; justify-content: center; color: #1b1b1f; }
.tool kbd { position: absolute; right: 8px; bottom: 9px; font: 18px/24px "Noto Sans CJK SC", sans-serif; color: #b8b8b8; }
.tool.sel { background: #e0dfff; color: #030064; }
.tool.sel kbd { color: #030064; }
.div { width: 2px; height: 48px; background: #f1f0ff; margin: 0 8px; }
.laser { width: 64px; height: 64px; border-radius: 16px; background: #fff; display: flex; align-items: center; justify-content: center; }
.hint { margin: 22px 0 0 191px; width: 1100px; text-align: center; font-size: 22px; letter-spacing: -.36px; line-height: 34px; color: #b8b8b8; white-space: nowrap; }
.right { display: flex; gap: 24px; }
.share { width: 107px; background: #12b886; color: #fff; position: relative; padding-bottom: 1px; }
.count { position: absolute; right: -8px; bottom: -8px; width: 31px; height: 31px; border-radius: 50%; background: #b2f2bb; color: #2b8a3e; font-size: 18px; line-height: 30px; text-align: center; font-weight: 500; }
.lib { width: 164px; gap: 16px; font-size: 22px; letter-spacing: .6px; }
.bottom { display: flex; align-items: center; }
.zoom { width: 264px; justify-content: space-between; padding: 0 20px; }
.zoom span { padding-bottom: 2px; }
.hist { width: 144px; margin-left: 19px; gap: 38px; }
.off { color: #b8b8b8; }
.shield { width: 32px; height: 36px; margin-left: auto; margin-right: 42px; }

/* launcher tooltip over the browser window */
.tip { position: absolute; left: 63px; top: 76px; width: 385px; height: 132px; border: 2px solid #343438; border-radius: 10px; background: rgba(0,0,0,.84); display: flex; gap: 24px; padding: 36px 0 0 35px; color: #fff; font-size: 28px; line-height: 38px; }
.tip svg { width: 58px; height: 60px; }
.tip div { display: flex; flex-direction: column; margin-top: -10px; white-space: nowrap; }
.tip strong { letter-spacing: .15px; }
```
FILE: scene.js
```js
const NS = 'http://www.w3.org/2000/svg';

// favicons, in tab order
const tabs = ('discord sheets cat docs docs hug x x x yt sound drive star note note note note gem x me cat link suno insta ' +
  'slash cross git notion horse moon gem stellar catr catr canva note globe lion driver evek docs bulb bulb bulb lion ' +
  'stellarr map lotus lotus g cat catl starr mer catl sheets nomad sound catr glober lox me me').split(' ');
const rest = ['lion', 'git', 'lion', 'git', 'wiki'];
const tabHtml = n => `<div class="tab"><svg viewBox="5 0 22 32"><use href="#t-${n}"/></svg></div>`;
document.getElementById('tabs').innerHTML = tabs.map(tabHtml).join('');
document.getElementById('tabs-rest').innerHTML = rest.map(tabHtml).join('');

// panel load graphs
const cpu = [10, 6, 10, 11, 15, 12, 16, 6, 19, 0, 11, 0, 6, 5, 5, 8, 6, 0, 13, 5];
document.getElementById('cpu').setAttribute('d', cpu.map((h, i) => `M${i * 12} 68v${-h}h8v${h}z`).join(''));
const net = [6,4,5,5,6,10,8,10,6,4,4,6,6,4,6,8,8,12,4,5,6,4,8,5,8,4,4,4,5,4,4,6,5,8,4,5,8,6,4,6,4,8,6,5,7,8,6,8,10,14,6,
  14,7,12,12,6,6,5,6,6,6,6,6,10,10,14,14,18,6,6,6,8,22,8,8,8,8,8,6,8,6,8,8,6,6,9,8,8,6,8,8,6,8,8,6,8,7,8,10,6,8,6,8,6,8,
  6,6,8,6,8,6,9,8,10,8,10,12,12,10,8,6,4,4,6,5,8,8,8];
document.getElementById('net').setAttribute('d', net.slice(0, 128).map((h, i) => `M${240 + i * 2} 68v${-h}h2v${h}z`).join(''));

// hand-drawn shapes: every outline is stroked twice with slightly different bows
const layer = document.getElementById('strokes');
function add(d, fill = 'none', width = 2.4) {
  const p = document.createElementNS(NS, 'path');
  const attrs = { d, fill, stroke: '#1e1e1e', 'stroke-width': width, 'stroke-linecap': 'round', 'stroke-linejoin': 'round' };
  for (const k in attrs) p.setAttribute(k, attrs[k]);
  layer.append(p);
}
function box(l, t, r, b, rad, bows, fill) {
  const mx = (l + r) / 2, my = (t + b) / 2;
  bows.forEach(([n, e, s, w, k = 0], i) => add(
    `M${l + rad} ${t}Q${mx} ${t + n} ${r - rad} ${t}Q${r + k} ${t - k} ${r} ${t + rad}` +
    `Q${r + e} ${my} ${r} ${b - rad}Q${r} ${b} ${r - rad} ${b}Q${mx} ${b + s} ${l + rad} ${b}` +
    `Q${l} ${b + k} ${l} ${b - rad}Q${l + w} ${my} ${l} ${t + rad}Q${l - k} ${t} ${l + rad} ${t}Z`, i ? 'none' : fill));
}
box(576.5, 550, 1974.5, 1322.5, 36, [[-4, 0, -1, 1, 0], [7, 1, 2, -1, 2]]);
box(597.5, 580.5, 1000.5, 1278, 38, [[0, 0, -3, 0, 0], [2, 1, 5, -1, 3]], '#a5d8ff');
box(621.5, 643, 954, 687, 11, [[-2, -1, -2, 2, 0], [3, 1, 2, 0, 2]]);
box(626, 734, 961, 776, 11, [[-1, 1, -2, 1, 0], [2, -1, 1, 0, 2]]);
box(625, 817.5, 962, 881.5, 16, [[-1, 0, 0, 0, 0], [3, 3, 1, 1, 2]]);
box(621.5, 918.5, 973, 1252.5, 38, [[-1, 0, -3, 0, 0], [2, 0, 5, 2, 2]]);
box(1031.5, 591, 1922.5, 934, 37, [[0, 0, -3, 0, 0], [4, 1, 1, -1, 1]]);
box(1062.5, 620, 1195, 658, 9, [[-1, 1, 1, -1, 0], [1, 0, -1, 1, 2]]);
box(1034, 960, 1916, 1284, 37, [[-4, 0, 0, -2, 0], [1, -5, 2, -2, 2]]);
box(1079, 1051, 1417, 1089, 9, [[-3, 1, -3, 0, 0], [1, 0, 0, -1, 2]]);
box(1078, 1120, 1416, 1158.5, 9, [[-2, 0, -1, 0, 0], [2, 1, 0, -1, 2]]);
box(1075, 1190, 1412.5, 1228, 9, [[-4, 1, -3, -1, 0], [1, 0, 0, 0, 2]]);
box(1480, 1047, 1865.5, 1085, 9, [[-2, 1, -3, -1, 0], [2, 0, 0, 0, 3]]);
box(1478, 1114, 1852.5, 1152, 9, [[-3, -2, 0, 1, 0], [2, 1, 3, 0, 1]]);
box(1481.5, 1192, 1852.5, 1230.5, 9, [[-1, 0, 0, -1, 0], [1, 0, 3, 0, 2]]);

// connectors
add('M769 701Q768 712 768 723M764 714Q766 718 768 723Q770 719 772 713', 'none', 3);
add('M1188 747Q1258 749.500 1328 747M1188 748Q1260 744 1328 748M1299 735.500Q1312 743 1328 748M1299 757Q1312 750 1328 747');
add('M1529 762Q1580 766 1636 765M1529 764.500Q1585 765 1636 767M1606 756Q1620 763 1636 766M1606 777Q1618 769 1636 765.500');

// nodes
add('M1110 727C1086 729 1067 750 1067 773C1068 801 1090 821 1118 821C1146 820 1166 798 1166 772C1165 745 1144 727 1115 726');
add('M1097 732C1106 728 1114 727 1120 728C1146 731 1166 750 1166 775C1165 802 1142 823 1117 822C1088 821 1066 796 1067 770C1069 746 1090 727 1118 727');
add('M1423 706Q1428 699 1433 706L1477 748Q1483 755 1477 761L1434 803Q1428 809 1422 803L1376 761Q1370 754 1376 749ZM1435 708Q1428 699 1421 708L1376 750M1477 760L1433 804Q1427 808 1422 802');
add('M1692 721C1672 727 1661 745 1661 768C1661 797 1683 817 1708 817C1734 816 1753 794 1753 767C1752 741 1735 720 1708 719C1700 719 1692 721 1687 724');
add('M1690 722C1722 712 1752 735 1754 764C1754 792 1735 816 1708 816C1681 814 1660 796 1660 766C1662 744 1674 728 1692 721');
```
